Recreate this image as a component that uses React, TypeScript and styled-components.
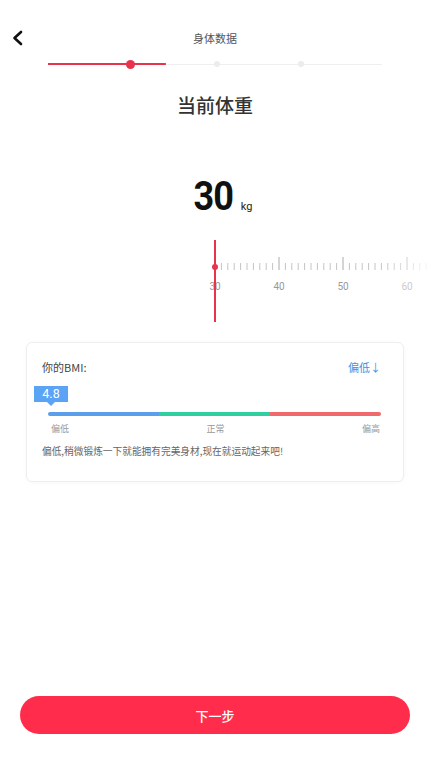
import * as React from "react"
import styled, { createGlobalStyle } from "styled-components"

const GlobalStyle = createGlobalStyle`
    html, body {
        margin: 0;
        padding: 0;
        background: #fff;
    }
    body {
        font-family: Roboto, "Noto Sans CJK SC", "Noto Sans", sans-serif;
        -webkit-font-smoothing: antialiased;
    }
`

const Page = styled.div`
    display: flex;
    flex-direction: column;
    min-height: 766px;
    box-sizing: border-box;
`

const Header = styled.header`
    display: grid;
    grid-template-columns: 44px 1fr 44px;
    align-items: center;
    height: 20px;
    padding-top: 28px;
`

const BackButton = styled.button`
    display: flex;
    align-items: center;
    justify-content: flex-start;
    padding: 0 0 0 12px;
    border: none;
    background: none;
    height: 20px;
    cursor: pointer;
`

const Title = styled.h1`
    margin: 0;
    text-align: center;
    font-family: "Noto Sans CJK SC", sans-serif;
    font-size: 11px;
    line-height: 20px;
    font-weight: 400;
    color: #555;
`

const Stepper = styled.div`
    display: flex;
    justify-content: space-evenly;
    align-items: center;
    height: 8px;
    margin: 12px 48px 0;
    background:
        linear-gradient(#e8334d, #e8334d) left center / 35.3% 2px no-repeat,
        linear-gradient(#efefef, #efefef) left center / 100% 1px no-repeat;
`

const StepDot = styled.span<{ $active?: boolean }>`
    width: ${p => (p.$active ? 9 : 6)}px;
    height: ${p => (p.$active ? 9 : 6)}px;
    border-radius: 50%;
    background: ${p => (p.$active ? "#e8334d" : "#ececec")};
`

const Heading = styled.h2`
    margin: 23px 0 0;
    text-align: center;
    font-size: 19px;
    line-height: 28px;
    font-weight: 500;
    color: #333;
    font-family: "Noto Sans CJK SC", sans-serif;
`

const WeightRow = styled.div`
    display: flex;
    justify-content: center;
    align-items: baseline;
    gap: 8px;
    margin-top: 53px;
    padding-left: 10px;
    height: 50px;
`

const WeightValue = styled.span`
    font-family: Roboto, sans-serif;
    font-size: 41px;
    font-weight: 700;
    color: #111;
    letter-spacing: -1px;
    display: inline-block;
    transform: scaleX(0.88);
    transform-origin: right center;
`

const WeightUnit = styled.span`
    font-size: 11px;
    color: #222;
`

const RulerSvg = styled.svg`
    display: block;
    margin-top: 18px;
    width: 430px;
    height: 84px;
`

const Card = styled.section`
    margin: 18px 26px 0;
    padding: 15px 22px 22px 15px;
    border: 1px solid #eeeeee;
    border-radius: 6px;
    box-shadow: 0 1px 4px rgba(0, 0, 0, 0.03);
`

const CardHead = styled.div`
    display: flex;
    justify-content: space-between;
    align-items: center;
    font-family: "Noto Sans CJK SC", sans-serif;
    font-size: 11px;
    line-height: 18px;
`

const CardLabel = styled.span`
    color: #444;
`

const Level = styled.span`
    color: #4a90e2;
`

const BarWrap = styled.div`
    position: relative;
    margin: 36px 0 0 6px;
`

const Bar = styled.div`
    display: flex;
    height: 4px;
    border-radius: 2px;
    overflow: hidden;
`

const BarSegment = styled.span<{ $color: string }>`
    flex: 1;
    background: ${p => p.$color};
`

const Tooltip = styled.span`
    position: absolute;
    bottom: 14px;
    transform: translateX(-50%);
    width: 34px;
    height: 16px;
    background: #5aa3f5;
    color: #fff;
    font-size: 12.5px;
    line-height: 16px;
    text-align: center;

    &::after {
        content: "";
        position: absolute;
        left: 50%;
        bottom: -4px;
        margin-left: -4px;
        border-left: 4px solid transparent;
        border-right: 4px solid transparent;
        border-top: 4px solid #5aa3f5;
    }
`

const BarLabels = styled.div`
    display: flex;
    justify-content: space-between;
    padding: 0 1px 0 9px;
    margin-top: 6px;
    font-family: "Noto Sans CJK SC", sans-serif;
    font-size: 9px;
    line-height: 14px;
    color: #999;
`

const Message = styled.p`
    margin: 7px 0 0;
    font-family: "Noto Sans CJK SC", sans-serif;
    font-size: 9.7px;
    line-height: 16px;
    color: #666;
`

const Spacer = styled.div`
    flex: 1;
`

const NextButton = styled.button`
    margin: 0 20px 32px;
    height: 38px;
    border: none;
    border-radius: 19px;
    background: #ff2d4b;
    color: #fff;
    font-family: "Noto Sans CJK SC", sans-serif;
    font-size: 13px;
    font-weight: 500;
    cursor: pointer;
`

const MIN = 30
const STEP = 6.4
const START_X = 215

const Ruler: React.FunctionComponent<{ value: number }> = ({ value }) => {
    const ticks = []
    for (let i = 0; i < 34; i++) {
        const v = value + i
        const x = START_X + i * STEP
        const major = v % 10 === 0
        const fade = x > 380 ? Math.max(0.15, 1 - (x - 380) / 55) : 1
        ticks.push(
            <g key={v} opacity={fade}>
                <line x1={x} x2={x} y1={major ? 17 : 23} y2={30} stroke={major ? "#aaa" : "#c4c4c4"} strokeWidth={1} />
                {major && (
                    <text x={x} y={50} textAnchor="middle" fontSize="10" fill="#999" fontFamily="Roboto, sans-serif">
                        {v}
                    </text>
                )}
            </g>
        )
    }
    return (
        <RulerSvg viewBox="0 0 430 84">
            {ticks}
            <line x1={START_X} x2={START_X} y1={0} y2={82} stroke="#e8334d" strokeWidth={2} />
            <circle cx={START_X} cy={27} r={3} fill="#e8334d" />
        </RulerSvg>
    )
}

export default function App() {
    const bmi = 4.8
    // marker sits near the very start of the scale for low values
    const tooltipLeft = 3

    return (
        <Page>
            <GlobalStyle />
            <Header>
                <BackButton aria-label="back">
                    <svg width="12" height="16" viewBox="0 0 12 16">
                        <path d="M9 2 L2.5 8 L9 14" fill="none" stroke="#111" strokeWidth="2.6" strokeLinecap="round" strokeLinejoin="round" />
                    </svg>
                </BackButton>
                <Title>身体数据</Title>
                <span />
            </Header>

            <Stepper>
                <StepDot $active />
                <StepDot />
                <StepDot />
            </Stepper>

            <Heading>当前体重</Heading>

            <WeightRow>
                <WeightValue>{MIN}</WeightValue>
                <WeightUnit>kg</WeightUnit>
            </WeightRow>

            <Ruler value={MIN} />

            <Card>
                <CardHead>
                    <CardLabel>你的BMI:</CardLabel>
                    <Level>偏低↓</Level>
                </CardHead>
                <BarWrap>
                    <Tooltip style={{ left: tooltipLeft }}>{bmi}</Tooltip>
                    <Bar>
                        <BarSegment $color="#5b9eec" />
                        <BarSegment $color="#2fcf9f" />
                        <BarSegment $color="#f06a6d" />
                    </Bar>
                </BarWrap>
                <BarLabels>
                    <span>偏低</span>
                    <span>正常</span>
                    <span>偏高</span>
                </BarLabels>
                <Message>偏低,稍微锻炼一下就能拥有完美身材,现在就运动起来吧!</Message>
            </Card>

            <Spacer />
            <NextButton>下一步</NextButton>
        </Page>
    )
}
